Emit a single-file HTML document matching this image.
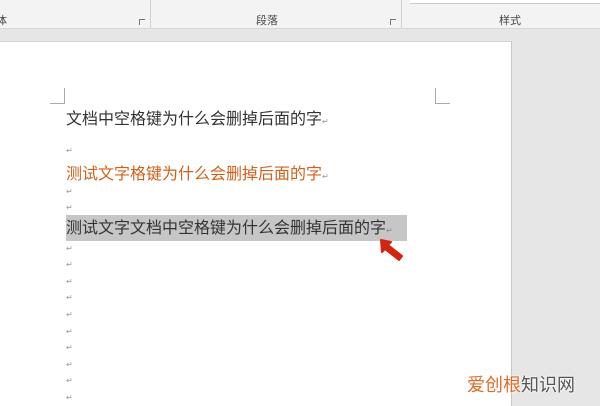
<!DOCTYPE html><html><head><meta charset="utf-8"><style>
body{margin:0;width:600px;height:405px;overflow:hidden;background:#e6e6e6;position:relative;font-family:"Liberation Sans","Noto Sans CJK SC",sans-serif}
.a{position:absolute}
.rib{left:0;top:0;width:600px;height:28px;background:#f3f3f3;border-bottom:1px solid #d6d6d6}
.sep{top:0;width:1px;height:28px;background:#d0d0d0}
.lab{top:12px;font-size:11px;color:#444}
.page{left:0;top:41px;width:511px;height:364px;background:#fff;border-right:1px solid #c8c8c8;border-top:1px solid #d4d4d4}
.t{left:66px;font-size:16px;line-height:20px;color:#333;white-space:nowrap;letter-spacing:0}
.pm{left:66px;font-size:8px;color:#999}
</style></head><body>
<div class="a rib"></div>
<div class="a sep" style="left:150px"></div><div class="a sep" style="left:401px"></div>
<div class="a lab" style="left:-4px">体</div>
<div class="a lab" style="left:256px">段落</div>
<div class="a lab" style="left:499px">样式</div>
<div class="a" style="left:139px;top:19px;width:5px;height:5px;border-left:1px solid #777;border-top:1px solid #777"></div>
<div class="a" style="left:390px;top:19px;width:5px;height:5px;border-left:1px solid #777;border-top:1px solid #777"></div>
<div class="a" style="left:410px;top:0;width:190px;height:3px;border-bottom:1px solid #ccc;background:#fff"></div>
<div class="a page"></div>
<div class="a" style="left:50px;top:88px;width:14px;height:15px;border-right:1px solid #aaa;border-bottom:1px solid #aaa"></div>
<div class="a" style="left:435px;top:88px;width:14px;height:15px;border-left:1px solid #aaa;border-bottom:1px solid #aaa"></div>
<div class="a t" style="top:110px">文档中空格键为什么会删掉后面的字<span style="font-size:8px;color:#999">↵</span></div>
<div class="a pm" style="top:146px">↵</div>
<div class="a t" style="top:165px;color:#d0601a">测试文字格键为什么会删掉后面的字<span style="font-size:8px;color:#999">↵</span></div>
<div class="a pm" style="top:187px">↵</div>
<div class="a pm" style="top:203px">↵</div>
<div class="a" style="left:66px;top:215px;width:341px;height:26px;background:#c6c6c6"></div>
<div class="a t" style="top:219px">测试文字文档中空格键为什么会删掉后面的字<span style="font-size:8px;color:#888">↵</span></div>
<svg class="a" style="left:377px;top:236px" width="30" height="28"><path d="M4 4 L14 6 L11 9 L25 20 L22 24 L8 13 L5 16 Z" fill="#d42410" stroke="#d42410" stroke-linejoin="round" stroke-width="2"/></svg>
<div class="a pm" style="top:244px">↵</div><div class="a pm" style="top:260px">↵</div><div class="a pm" style="top:277px">↵</div><div class="a pm" style="top:293px">↵</div><div class="a pm" style="top:310px">↵</div><div class="a pm" style="top:327px">↵</div><div class="a pm" style="top:343px">↵</div><div class="a pm" style="top:360px">↵</div><div class="a pm" style="top:376px">↵</div><div class="a pm" style="top:393px">↵</div>
<div class="a" style="left:467px;top:374px;font-size:18px;line-height:22px;text-shadow:0 0 2px #fff,0 0 2px #fff"><span style="color:#e06a2a">爱创根</span><span style="color:#555">知识网</span></div>
</body></html>
